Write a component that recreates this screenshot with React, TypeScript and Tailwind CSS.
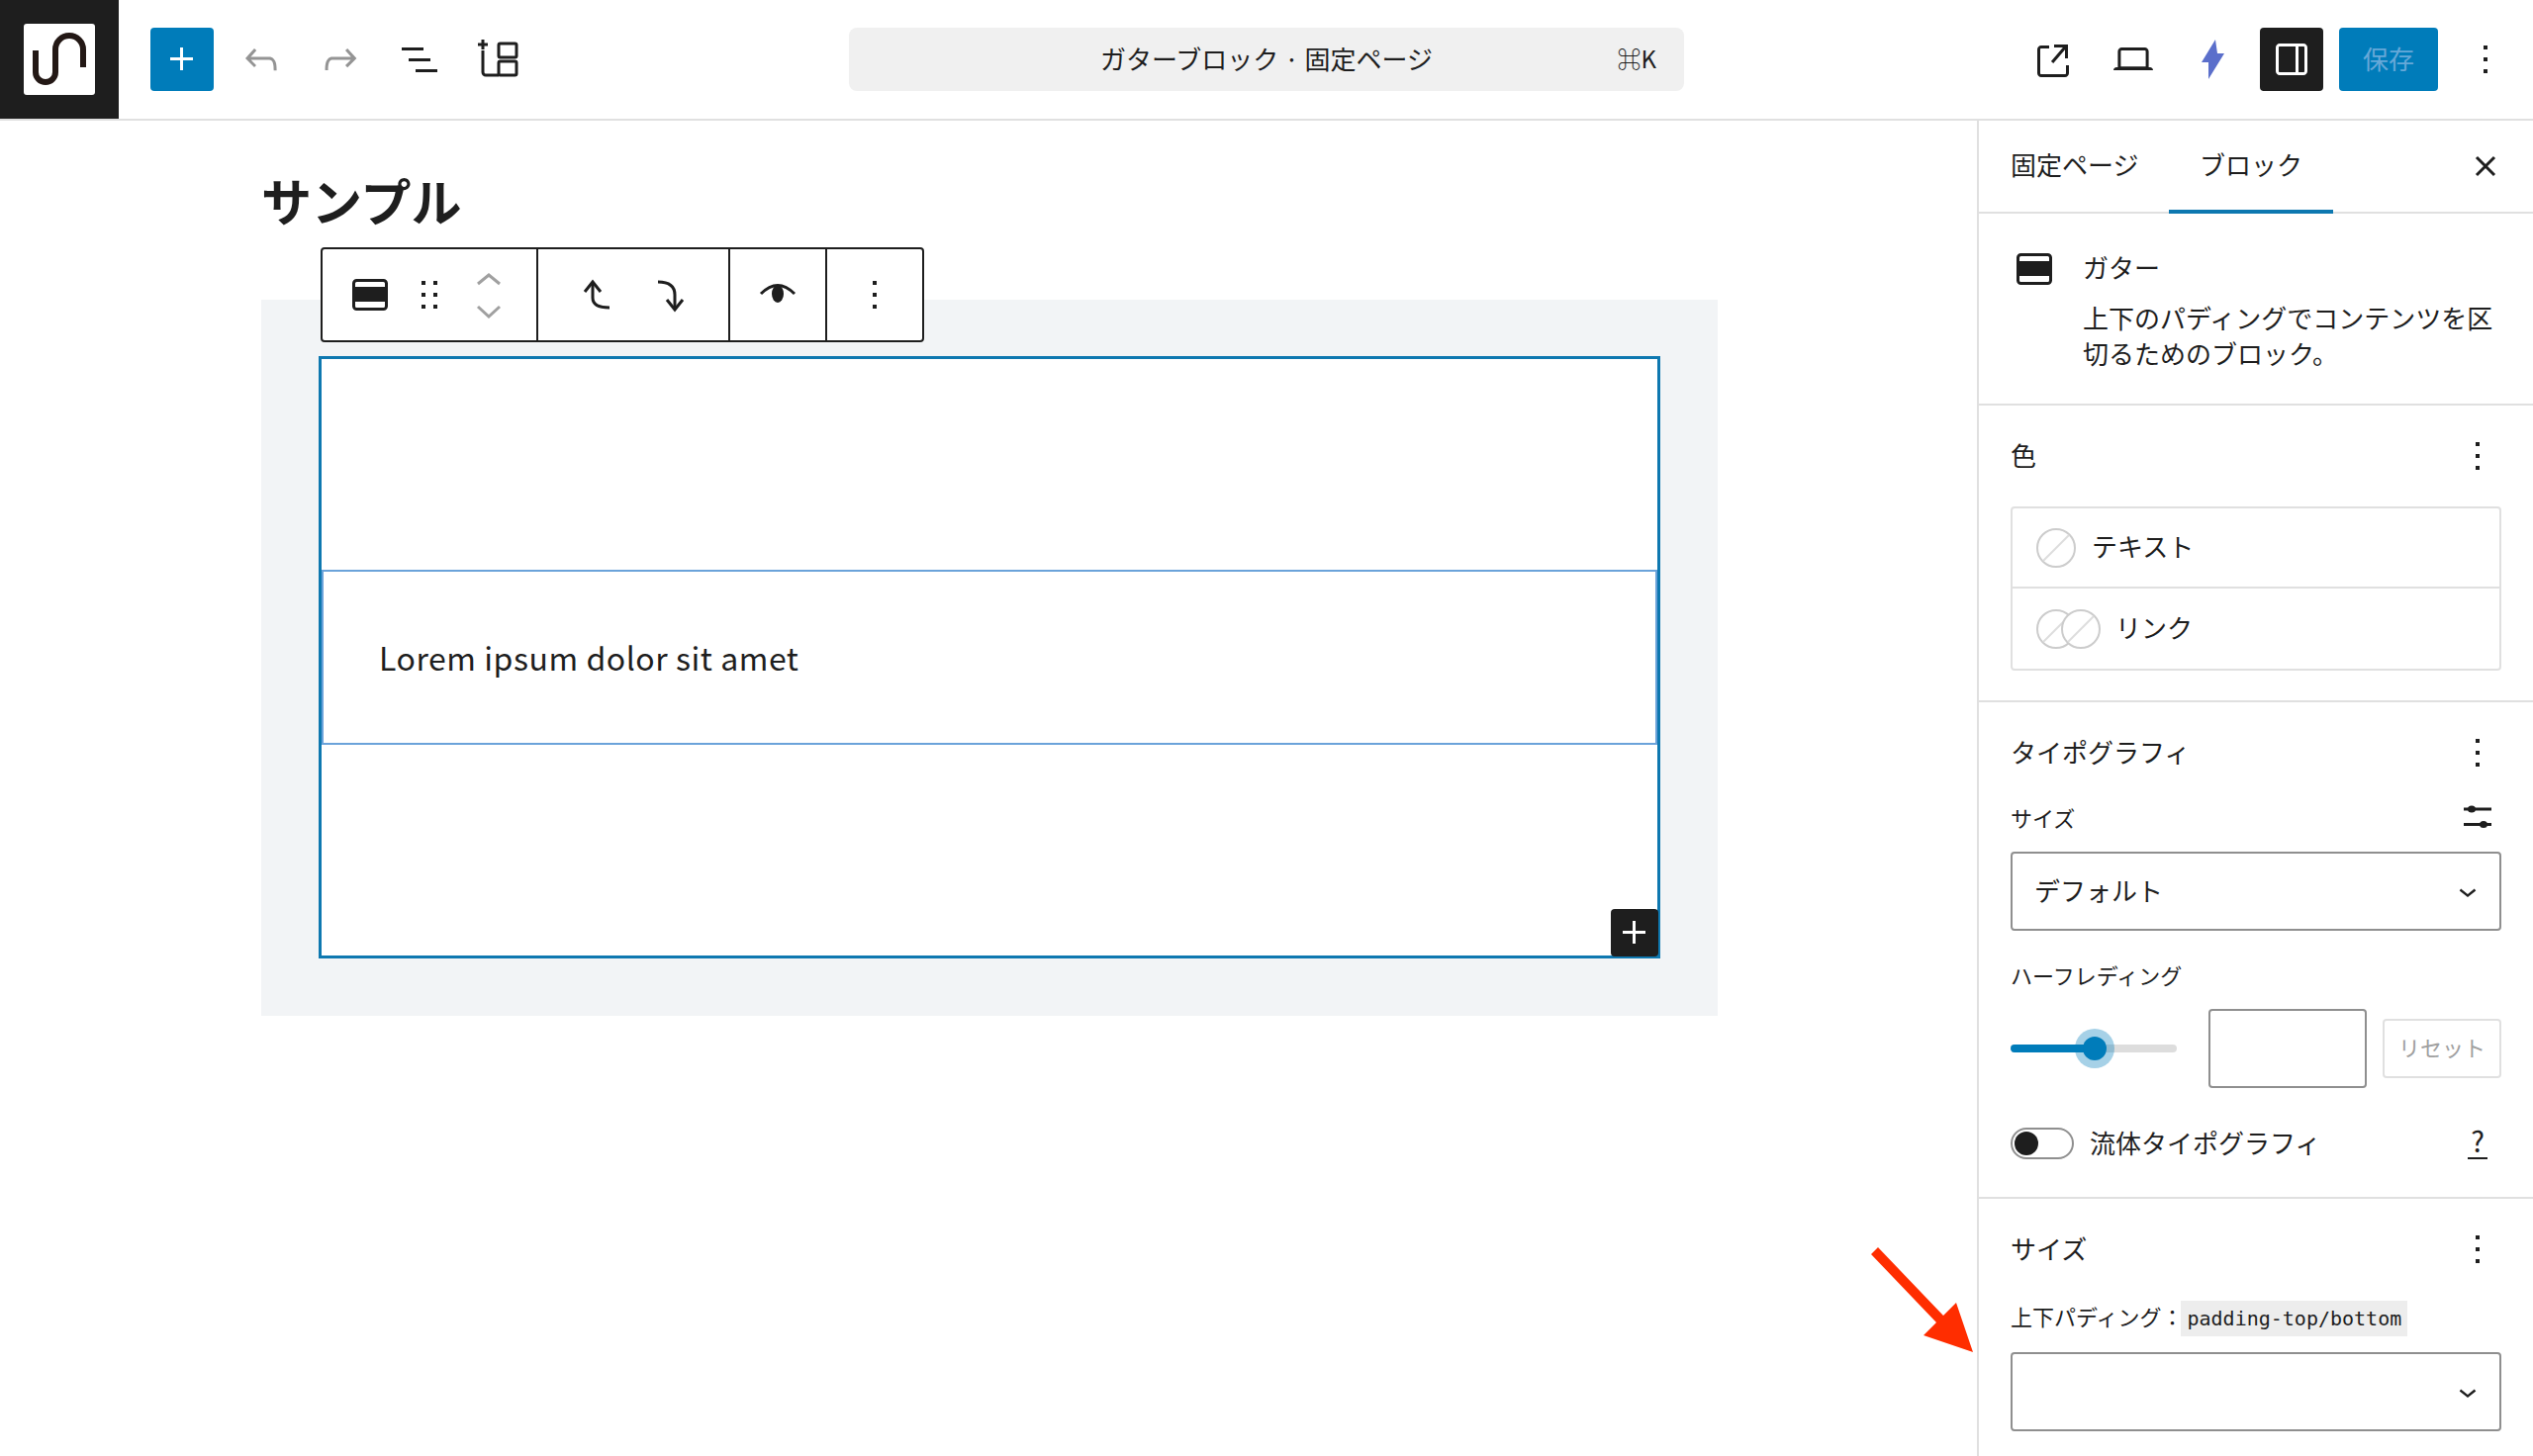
import React from 'react';

const MoreVertical = ({ className = '' }: { className?: string }) => (
  <svg viewBox="0 0 24 24" className={`w-12 h-12 fill-current ${className}`}>
    <path d="M13 19h-2v-2h2v2zm0-6h-2v-2h2v2zm0-6h-2V5h2v2z" />
  </svg>
);

const ChevronDown = () => (
  <svg viewBox="0 0 24 24" className="w-9 h-9 fill-[#1e1e1e]">
    <path d="M17.5 11.6L12 16l-5.5-4.4.9-1.2L12 14l4.5-3.6 1 1.2z" />
  </svg>
);

const GutterIcon = () => (
  <svg viewBox="0 0 36 32" className="w-9 h-8">
    <rect x="1.5" y="1.5" width="33" height="29" rx="3" fill="#fff" stroke="#1e1e1e" strokeWidth="3" />
    <rect x="2" y="8" width="32" height="15" fill="#1e1e1e" />
  </svg>
);

const Swatch = ({ className = '' }: { className?: string }) => (
  <svg viewBox="0 0 40 40" className={`w-10 h-10 shrink-0 ${className}`}>
    <circle cx="20" cy="20" r="19" fill="#fff" stroke="#cccccc" strokeWidth="2" />
    <path d="M7 33L33 7" stroke="#dddddd" strokeWidth="2" />
  </svg>
);

const SelectBox = ({ label }: { label?: string }) => (
  <div className="h-20 w-[496px] border-2 border-[#8f8f8f] rounded-[4px] flex items-center justify-between pl-[22px] pr-[14px] text-[26px]">
    <span className="-mt-1">{label}</span>
    <ChevronDown />
  </div>
);

const PanelHeader = ({ title }: { title: string }) => (
  <div className="flex items-center justify-between h-12 text-[26px]">
    <span className="-mt-1">{title}</span>
    <MoreVertical />
  </div>
);

export default function App() {
  return (
    <div className="relative w-[2560px] h-[1472px] overflow-hidden bg-white text-[#1e1e1e] font-['Noto_Sans_CJK_JP','Noto_Sans',sans-serif]">
      {/* Top bar */}
      <header className="h-[122px] border-b-2 border-[#e0e0e0] flex items-center">
        <div className="flex-1 flex items-center h-[120px]">
          <div className="w-[120px] h-[120px] bg-[#1e1e1e] flex items-center justify-center shrink-0">
            <div className="w-[72px] h-[72px] bg-white rounded-[3px]">
              <svg viewBox="0 0 72 72" className="w-[72px] h-[72px]" fill="none" stroke="#231815" strokeWidth="6">
                <path d="M12 27V49a10 10 0 0 0 20 0V26a14 14 0 0 1 28 0V44" />
              </svg>
            </div>
          </div>
          <div className="flex items-center gap-4 ml-8">
            <button className="w-16 h-16 bg-[#007cba] rounded-[4px] flex items-center justify-center">
              <svg viewBox="0 0 24 24" className="w-12 h-12 fill-white">
                <path d="M11 12.5V17.5H12.5V12.5H17.5V11H12.5V6H11V11H6V12.5H11Z" />
              </svg>
            </button>
            <button className="w-16 h-16 flex items-center justify-center">
              <svg viewBox="0 0 24 24" className="w-12 h-12 fill-[#949494]">
                <path d="M18.3 11.7c-.6-.6-1.4-.9-2.3-.9H6.7l2.9-3.3-1.1-1-4.5 5L8.5 16l1-1-2.7-2.7H16c.5 0 .9.2 1.3.5 1 1 1 3.4 1 4.5v.3h1.5v-.2c0-1.5 0-4.3-1.5-5.7z" />
              </svg>
            </button>
            <button className="w-16 h-16 flex items-center justify-center">
              <svg viewBox="0 0 24 24" className="w-12 h-12 fill-[#949494]">
                <path d="M15.6 6.5l-1.1 1 2.9 3.3H8c-.9 0-1.7.3-2.3.9-1.4 1.5-1.4 4.2-1.4 5.6v.2h1.5v-.3c0-1.1 0-3.5 1-4.5.3-.3.7-.5 1.3-.5h9.2L14.5 15l1.1 1.1 4.6-4.6-4.6-5z" />
              </svg>
            </button>
            <button className="w-16 h-16 flex items-center justify-center">
              <svg viewBox="0 0 24 24" className="w-12 h-12 fill-[#1e1e1e]">
                <path d="M3 6h11v1.5H3V6Zm3.5 5.5h11V13h-11v-1.5ZM21 17H10v1.5h11V17Z" />
              </svg>
            </button>
            <button className="w-16 h-16 flex items-center justify-center">
              <svg viewBox="0 0 48 48" className="w-12 h-12" fill="none" stroke="#1e1e1e" strokeWidth="3">
                <path d="M8 4V14M3 9H13" />
                <path d="M8 15V37a3 3 0 0 0 3 3H24" />
                <rect x="24" y="8" width="18" height="14" rx="1.5" />
                <rect x="24" y="26" width="18" height="14" rx="1.5" />
              </svg>
            </button>
          </div>
        </div>

        {/* Command bar */}
        <div className="relative w-[844px] h-16 bg-[#f0f0f0] rounded-[8px] flex items-center justify-center text-[26px] leading-none">
          <span className="-mt-[2px]">ガターブロック · 固定ページ</span>
          <span className="absolute right-7 top-[19px] text-[24px]">⌘K</span>
        </div>

        <div className="flex-1 flex items-center justify-end">
          <svg viewBox="0 0 24 24" className="w-12 h-12 fill-[#1e1e1e] mr-[33px]">
            <path d="M19.5 4.5h-7V6h4.44l-5.97 6.97 1.14.97L18 7.1v4.4h1.5v-7zM18 19.5H6c-.28 0-.5-.22-.5-.5V7c0-.28.22-.5.5-.5h4V5H6c-1.1 0-2 .9-2 2v12c0 1.1.9 2 2 2h12c1.1 0 2-.9 2-2v-4h-1.5v4c0 .28-.22.5-.5.5z" />
          </svg>
          <svg viewBox="0 0 24 24" className="w-12 h-12 fill-[#1e1e1e] mr-8">
            <path d="M20.5 16h-.7V8c0-1.1-.9-2-2-2H6.2c-1.1 0-2 .9-2 2v8h-.7c-.8 0-1.5.7-1.5 1.5h20c0-.8-.7-1.5-1.5-1.5zM5.7 8c0-.3.2-.5.5-.5h11.6c.3 0 .5.2.5.5v7.6H5.7V8z" />
          </svg>
          <svg viewBox="0 0 48 48" className="w-12 h-12 fill-[#5b6fcb] mr-6">
            <path d="M27 4L13 27H20V44L36 18H29Z" />
          </svg>
          <button className="w-16 h-16 bg-[#1e1e1e] rounded-[4px] flex items-center justify-center mr-4">
            <svg viewBox="0 0 24 24" className="w-12 h-12 fill-white">
              <path d="M18 4H6c-1.1 0-2 .9-2 2v12c0 1.1.9 2 2 2h12c1.1 0 2-.9 2-2V6c0-1.1-.9-2-2-2zm-4 14.5H6c-.3 0-.5-.2-.5-.5V6c0-.3.2-.5.5-.5h8v13zm4.5-.5c0 .3-.2.5-.5.5h-2.5v-13H18c.3 0 .5.2.5.5v12z" />
            </svg>
          </button>
          <button className="w-[100px] h-16 pb-1 bg-[#007cba] rounded-[4px] text-[26px] text-[#66a8d8] mr-6">保存</button>
          <MoreVertical className="mr-6" />
        </div>
      </header>

      <main className="flex h-[1350px]">
        {/* Canvas */}
        <section className="relative flex-1 pl-[264px] pr-[262px]">
          <div className="h-[181px] pt-[49px]">
            <h1 className="text-[51px] leading-[62px] font-bold">サンプル</h1>
          </div>
          <div className="w-[1472px] h-[724px] bg-[#f2f4f6] pt-[57px] pl-[58px]">
            <div className="relative w-[1356px] h-[609px] bg-white border-[3px] border-[#0e78b0] pt-[213px]">
              <div className="h-[177px] pb-[2px] border-2 border-[#6ba3da] flex items-center pl-[56px] text-[32px] tracking-[0.55px] text-[#1e1e1e]">
                Lorem ipsum dolor sit amet
              </div>
              <button className="absolute -right-px -bottom-px w-12 h-12 bg-[#1e1e1e] rounded-[4px] flex items-center justify-center">
                <svg viewBox="0 0 24 24" className="w-12 h-12 fill-white">
                  <path d="M11 12.5V17.5H12.5V12.5H17.5V11H12.5V6H11V11H6V12.5H11Z" />
                </svg>
              </button>
            </div>
          </div>

          {/* Block toolbar */}
          <div className="absolute left-[324px] top-[128px] h-[96px] bg-white border-2 border-[#1e1e1e] rounded-[4px] flex">
            <div className="w-[218px] flex items-center pl-[30px] gap-[12px] border-r-2 border-[#1e1e1e]">
              <div className="w-9 h-8 mr-[6px]"><GutterIcon /></div>
              <svg viewBox="0 0 24 24" className="w-12 h-12 fill-[#1e1e1e]">
                <path d="M8 7h2V5H8v2zm0 6h2v-2H8v2zm0 6h2v-2H8v2zm6-14v2h2V5h-2zm0 8h2v-2h-2v2zm0 6h2v-2h-2v2z" />
              </svg>
              <svg viewBox="0 0 48 48" className="w-12 h-12" fill="none" stroke="#a0a0a0" strokeWidth="3">
                <path d="M13 13L24 4L35 13" />
                <path d="M13 36L24 46L35 36" />
              </svg>
            </div>
            <div className="w-[194px] flex items-center pl-[36px] gap-[26px] border-r-2 border-[#1e1e1e]">
              <svg viewBox="0 0 48 48" className="w-12 h-12" fill="none" stroke="#1e1e1e" strokeWidth="3">
                <path d="M19 11V27Q19 37 36 37" />
                <path d="M11 21L19 11L27 21" />
              </svg>
              <svg viewBox="0 0 48 48" className="w-12 h-12" fill="none" stroke="#1e1e1e" strokeWidth="3">
                <path d="M11 11Q28 11 28 24V38" />
                <path d="M20 29L28 39L36 29" />
              </svg>
            </div>
            <div className="w-[98px] flex items-center justify-center border-r-2 border-[#1e1e1e]">
              <svg viewBox="0 0 48 48" className="w-12 h-12">
                <path d="M7 23Q24 6 41 23" fill="none" stroke="#1e1e1e" strokeWidth="3" />
                <ellipse cx="24" cy="23" rx="6" ry="9" fill="#1e1e1e" />
              </svg>
            </div>
            <div className="w-[96px] flex items-center justify-center">
              <MoreVertical />
            </div>
          </div>
        </section>

        {/* Sidebar */}
        <aside className="w-[562px] shrink-0 border-l-2 border-[#e0e0e0]">
          <div className="relative h-[94px] border-b-2 border-[#e0e0e0] flex text-[26px]">
            <div className="w-[192px] pl-8 pb-[6px] flex items-center">固定ページ</div>
            <div className="w-[166px] pb-[4px] flex items-center justify-center border-b-4 border-[#0e78b0] -mb-[2px]">ブロック</div>
            <svg viewBox="0 0 32 32" className="absolute right-8 top-[30px] w-8 h-8" fill="none" stroke="#1e1e1e" strokeWidth="3">
              <path d="M7 7L25 25M25 7L7 25" />
            </svg>
          </div>

          <div className="h-[194px] border-b-2 border-[#e0e0e0] pl-[38px] pt-9 flex gap-[31px]">
            <div className="mt-1 shrink-0"><GutterIcon /></div>
            <div className="w-[424px] text-[26px] leading-[36px]">
              <p>ガター</p>
              <p className="mt-[15px]">上下のパディングでコンテンツを区切るためのブロック。</p>
            </div>
          </div>

          <div className="h-[300px] border-b-2 border-[#e0e0e0] px-8 pt-[27px]">
            <PanelHeader title="色" />
            <div className="mt-[27px] w-[496px] border-2 border-[#e0e0e0] rounded-[4px] text-[26px]">
              <div className="h-[81px] border-b-2 border-[#e0e0e0] flex items-center pl-6 gap-4">
                <Swatch />
                <span className="-mt-1">テキスト</span>
              </div>
              <div className="h-[81px] flex items-center pl-6 gap-[15px]">
                <div className="flex">
                  <Swatch />
                  <Swatch className="-ml-[15px]" />
                </div>
                <span className="-mt-1">リンク</span>
              </div>
            </div>
          </div>

          <div className="h-[502px] border-b-2 border-[#e0e0e0] px-8 pt-[27px]">
            <PanelHeader title="タイポグラフィ" />
            <div className="mt-[29px] h-7 flex items-center justify-between text-[22px]">
              <span className="-mt-1">サイズ</span>
              <svg viewBox="0 0 28 24" className="w-7 h-6 mr-[10px] -mt-[6px]" fill="#1e1e1e">
                <rect x="0" y="3.5" width="28" height="3" />
                <rect x="0" y="19" width="28" height="3" />
                <ellipse cx="8" cy="5" rx="4" ry="3.5" />
                <ellipse cx="20" cy="20.5" rx="4" ry="3.5" />
              </svg>
            </div>
            <div className="mt-[19px]"><SelectBox label="デフォルト" /></div>
            <div className="mt-[32px] h-7 flex items-center text-[22px]"><span className="-mt-1">ハーフレディング</span></div>
            <div className="mt-[19px] flex items-center">
              <div className="relative w-[168px] h-10 flex items-center">
                <div className="w-full h-2 rounded-full bg-[#dddddd]" />
                <div className="absolute left-0 top-4 w-[85px] h-2 rounded-l-full bg-[#007cba]" />
                <div className="absolute left-[65px] top-0 w-10 h-10 rounded-full bg-[#007cba]/35 flex items-center justify-center">
                  <div className="w-6 h-6 rounded-full bg-[#007cba]" />
                </div>
              </div>
              <div className="ml-8 w-[160px] h-20 border-2 border-[#8f8f8f] rounded-[4px]" />
              <div className="ml-4 w-[120px] h-[60px] pb-1 border-2 border-[#e0e0e0] rounded-[4px] flex items-center justify-center text-[22px] text-[#a0a0a0]">リセット</div>
            </div>
            <div className="mt-[40px] h-8 flex items-center text-[26px]">
              <div className="w-16 h-8 border-2 border-[#8f8f8f] rounded-full flex items-center pl-[2px]">
                <div className="w-6 h-6 rounded-full bg-[#1e1e1e]" />
              </div>
              <span className="ml-4 -mt-1">流体タイポグラフィ</span>
              <span className="ml-auto mr-[14px] w-5 h-[34px] -mt-[3px] border-b-2 border-[#1e1e1e] text-center text-[29px] leading-[28px]">?</span>
            </div>
          </div>

          <div className="px-8 pt-[27px]">
            <PanelHeader title="サイズ" />
            <div className="mt-7 h-9 flex items-center text-[22px]">
              <span className="-mt-[6px]">上下パディング：</span>
              <code className="-ml-[2px] h-9 px-[6px] bg-[#ededed] flex items-center text-[20px] font-['DejaVu_Sans_Mono',monospace]">padding-top/bottom</code>
            </div>
            <div className="mt-4"><SelectBox /></div>
          </div>
        </aside>
      </main>

      {/* Annotation arrow */}
      <svg viewBox="0 0 125 130" className="absolute left-[1880px] top-[1250px] w-[125px] h-[130px] fill-[#ff2d00]">
        <polygon points="18,11 84,80 97,67 114,117 64,100 77,87 11,18" />
      </svg>
    </div>
  );
}
